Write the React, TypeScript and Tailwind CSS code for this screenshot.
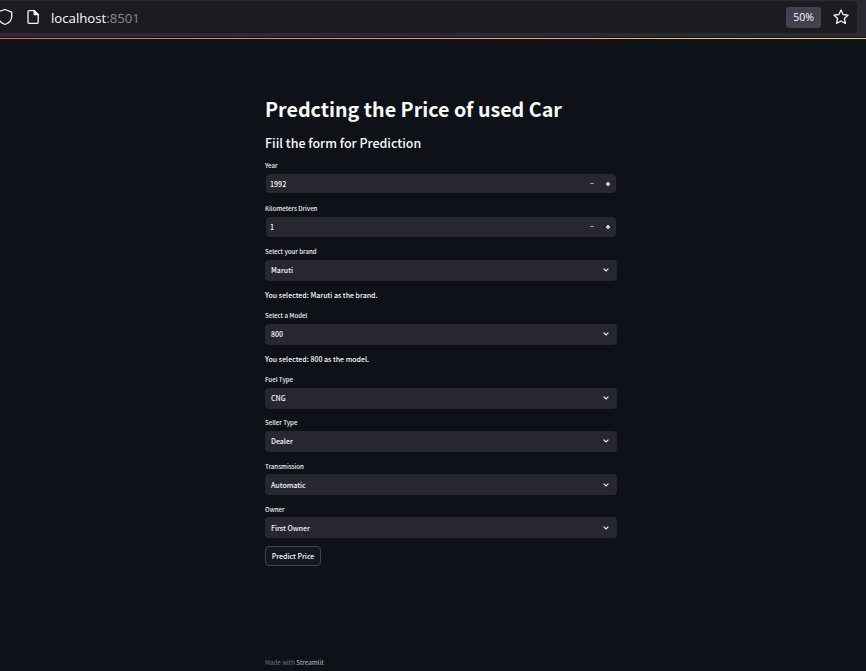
import type { ReactNode } from 'react';

function Label({ children, shift = 'pt-0' }: { children: ReactNode; shift?: string }) {
  return <div className={`h-3.5 whitespace-nowrap text-[6.15px] leading-3 font-medium text-[#f0f1f2] ${shift}`}>{children}</div>;
}

function NumberField({ label, value, box }: { label: string; value: string; box: string }) {
  return (
    <div>
      <Label>{label}</Label>
      <div className={`mr-px ml-px flex items-center rounded-[4px] bg-[#262730] pl-1 ${box}`}>
        <span className="flex-1 text-[7.1px] leading-5 font-medium text-[#fafafa]">{value}</span>
        <svg className="mr-1.5 h-2 w-8" viewBox="0 0 32 8" fill="none">
          <path d="M12 3.5h4" stroke="#9a9ba3" />
          <path d="M28 4h4M30 2v4" stroke="#c8c8ca" strokeWidth="2" />
        </svg>
      </div>
    </div>
  );
}

function SelectField({ label, value, shift, lift = 'pb-0' }: { label: string; value: string; shift?: string; lift?: string }) {
  return (
    <div>
      <Label shift={shift}>{label}</Label>
      <div className={`flex h-[21px] items-center rounded-[4px] bg-[#262730] pr-2 pl-1.5 ${lift}`}>
        <span className="flex-1 pt-0.5 text-[7.05px] leading-[19px] font-medium text-[#fafafa]">{value}</span>
        <svg className="h-1.5 w-1.5" viewBox="0 0 6 6" fill="none">
          <path d="M.6 1.7 3 3.9l2.4-2.2" stroke="#f5f5f5" strokeWidth="1.1" />
        </svg>
      </div>
    </div>
  );
}

function Message({ children }: { children: ReactNode }) {
  return <p className="h-[29px] whitespace-nowrap text-[7.03px] leading-[29px] font-medium text-[#fafafa]">{children}</p>;
}

export default function App() {
  return (
    <div className="flex h-[671px] w-[866px] flex-col overflow-hidden bg-[#0e1117]">
      <header className="h-[37px] shrink-0 bg-[#2b2a33] pt-px pr-[9px] pb-[4px]">
        <div className="flex h-8 items-center rounded-r-[4px] bg-[#1c1b22]">
          <svg className="h-[18px] w-[14px] shrink-0" viewBox="0 0 14 18" fill="none" stroke="#f4f4f6" strokeWidth="1.3">
            <path d="M-2 3.8 5 1.5l6.7 2.7v4.2C11.7 12.7 8.8 15 5 16.5 1 15-2 12.5-2 8" strokeLinejoin="round" />
          </svg>
          <svg className="ml-3 h-4 w-[14px] shrink-0" viewBox="0 0 14 16" fill="none" stroke="#f4f4f6" strokeWidth="1.3">
            <path d="M3 1.6h5.4l3.8 3.8v7.9a1 1 0 0 1-1 1H3a1 1 0 0 1-1-1V2.6a1 1 0 0 1 1-1Z" />
            <path d="M8.2 2v3.6h3.8Z" fill="#f4f4f6" />
          </svg>
          <span className="ml-[11px] flex-1 pt-1 font-['Open_Sans',sans-serif] text-[13.2px] text-[#fbfbfe]">
            localhost<span className="text-[#8a898f]">:8501</span>
          </span>
          <span className="mr-3 flex h-[21px] w-[35px] items-center justify-center rounded-[3px] bg-[#42414d] pt-0.5 font-['Open_Sans',sans-serif] text-[10.5px] text-[#fbfbfe]">50%</span>
          <svg className="mr-2 h-4 w-4" viewBox="0 0 16 16" fill="none" stroke="#f4f4f6" strokeWidth="1.3" strokeLinejoin="round">
            <path d="m8 .9 2.1 4.6 5 .6-3.7 3.4 1 5L8 12l-4.4 2.5 1-5L.9 6.1l5-.6Z" />
          </svg>
        </div>
      </header>
      <div className="h-px shrink-0 bg-[#0e1117]" />
      <div className="h-px shrink-0 bg-linear-to-r from-[#ff5c49] to-[#ffd166]" />
      <main className="ml-[265px] flex w-[352px] flex-1 flex-col font-['Noto_Sans_CJK_SC',sans-serif]">
        <h1 className="mt-[54px] h-8 text-[19.68px] leading-8 font-bold whitespace-nowrap text-[#fafafa]">Predcting the Price of used Car</h1>
        <h2 className="mt-2 mb-[7px] h-5 text-[12.46px] leading-5 font-medium whitespace-nowrap text-[#fafafa]">Fiil the form for Prediction</h2>
        <NumberField label="Year" value="1992" box="h-[19px]" />
        <div className="h-2.5" />
        <NumberField label="Kilometers Driven" value="1" box="h-5" />
        <div className="h-[9px]" />
        <SelectField label="Select your brand" value="Maruti" lift="pb-[2px]" />
        <Message>You selected: Maruti as the brand.</Message>
        <SelectField label="Select a Model" value="800" lift="pb-[2px]" />
        <Message>You selected: 800 as the model.</Message>
        <SelectField label="Fuel Type" value="CNG" lift="pb-[2px]" />
        <div className="h-2" />
        <SelectField label="Seller Type" value="Dealer" lift="pb-[2px]" />
        <div className="h-2" />
        <SelectField label="Transmission" value="Automatic" shift="pt-px" />
        <div className="h-2" />
        <SelectField label="Owner" value="First Owner" shift="pt-px" />
        <button className="mt-2 h-5 w-14 rounded-[4px] border border-[#41444c] bg-[#131720] text-[7.05px] leading-[18px] font-medium whitespace-nowrap text-[#fafafa]">Predict Price</button>
        <footer className="mt-[91px] h-3 text-[6.2px] leading-3 text-[#73757b]">
          Made with <span className="font-medium text-[#a0a2a6]">Streamlit</span>
        </footer>
      </main>
    </div>
  );
}
